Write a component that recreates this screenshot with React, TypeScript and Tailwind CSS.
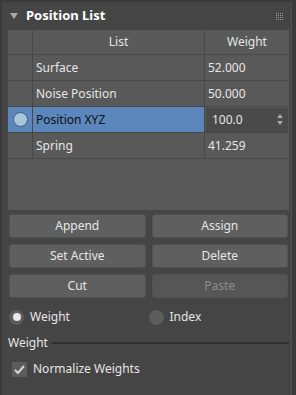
const rows = [
  { name: 'Surface', weight: '52.000' },
  { name: 'Noise Position', weight: '50.000' },
  { name: 'Position XYZ', weight: '100.0', active: true },
  { name: 'Spring', weight: '41.259' },
];

function Btn({ label, disabled }: { label: string; disabled?: boolean }) {
  return (
    <button
      className={
        'h-[24px] flex-1 rounded-[3px] border border-[#525252] text-[12px] ' +
        (disabled ? 'bg-[#565656] text-[#8c8c8c]' : 'bg-[#5f5f5f] text-[#e6e6e6]')
      }
    >
      {label}
    </button>
  );
}

function Radio({ label, on }: { label: string; on?: boolean }) {
  return (
    <div className="flex flex-1 items-center gap-[6px]">
      <span className="flex h-[15px] w-[15px] items-center justify-center rounded-full bg-[#5c5c5c]">
        {on && <span className="h-[8px] w-[8px] rounded-full bg-[#e8e8e8]" />}
      </span>
      <span>{label}</span>
    </div>
  );
}

export default function App() {
  return (
    <div
      className="h-[395px] w-[296px] overflow-hidden bg-[#3a3a3a] pl-[2px] pt-[2px] text-[12px] text-[#e6e6e6]"
      style={{ fontFamily: '"Noto Sans", "Open Sans", sans-serif' }}
    >
      <div className="h-full w-[290px] border-r border-[#505050] bg-[#454545]">
        <div className="flex h-[28px] items-center pl-[8px] pr-[8px]">
          <svg width="8" height="6" viewBox="0 0 8 6" className="mr-[8px]">
            <path d="M0 0 L8 0 L4 6 Z" fill="#a8a8a8" />
          </svg>
          <span className="flex-1 text-[13px] font-bold text-white">Position List</span>
          <div className="grid grid-cols-4 gap-[1px]">
            {Array.from({ length: 16 }).map((_, i) => (
              <span key={i} className="h-[1px] w-[1px] bg-[#9a9a9a]" />
            ))}
          </div>
        </div>

        <div className="ml-[6px] mr-[2px] h-[180px] bg-[#595959]">
          <div className="flex h-[25px] border-b border-[#484848]">
            <div className="w-[25px] border-r border-[#484848]" />
            <div className="flex flex-1 items-center justify-center border-r border-[#484848]">List</div>
            <div className="flex w-[84px] items-center justify-center">Weight</div>
          </div>
          {rows.map((r) => (
            <div key={r.name} className="flex h-[26px] border-b border-[#484848]">
              <div
                className={
                  'flex w-[25px] items-center justify-center border-r border-[#484848] ' +
                  (r.active ? 'bg-[#5b87bd]' : '')
                }
              >
                {r.active && (
                  <span className="h-[15px] w-[15px] rounded-full border border-[#3d5a7a] bg-[#a9c5dc]" />
                )}
              </div>
              <div
                className={
                  'flex flex-1 items-center border-r border-[#484848] pl-[3px] ' +
                  (r.active ? 'bg-[#5b87bd] text-[#101010]' : '')
                }
              >
                {r.name}
              </div>
              <div className="flex w-[84px] items-center">
                {r.active ? (
                  <div className="ml-[1px] mr-[1px] flex h-[24px] flex-1 items-center bg-[#4a4a4a] pl-[6px] pr-[5px]">
                    <span className="flex-1">100.0</span>
                    <svg width="6" height="11" viewBox="0 0 6 11">
                      <path d="M0 4 L3 0 L6 4 Z M0 7 L3 11 L6 7 Z" fill="#a8a8a8" />
                    </svg>
                  </div>
                ) : (
                  <span className="pl-[3px]">{r.weight}</span>
                )}
              </div>
            </div>
          ))}
        </div>

        <div className="ml-[7px] mr-[3px] mt-[4px] flex flex-col gap-[6px]">
          <div className="flex gap-[6px]">
            <Btn label="Append" />
            <Btn label="Assign" />
          </div>
          <div className="flex gap-[6px]">
            <Btn label="Set Active" />
            <Btn label="Delete" />
          </div>
          <div className="flex gap-[6px]">
            <Btn label="Cut" />
            <Btn label="Paste" disabled />
          </div>
        </div>

        <div className="ml-[7px] mr-[3px] mt-[10px] flex">
          <Radio label="Weight" on />
          <Radio label="Index" />
        </div>

        <div className="ml-[6px] mr-[2px] mt-[8px] flex items-center gap-[4px]">
          <span>Weight</span>
          <div className="h-[2px] flex-1 bg-[#2f2f2f]" />
        </div>

        <div className="ml-[10px] mt-[8px] flex items-center gap-[6px]">
          <span className="flex h-[15px] w-[15px] items-center justify-center bg-[#5c5c5c]">
            <svg width="11" height="9" viewBox="0 0 11 9">
              <path d="M1 5 L4 8 L10 1" stroke="#d8d8d8" strokeWidth="2" fill="none" />
            </svg>
          </span>
          <span>Normalize Weights</span>
        </div>
      </div>
    </div>
  );
}
